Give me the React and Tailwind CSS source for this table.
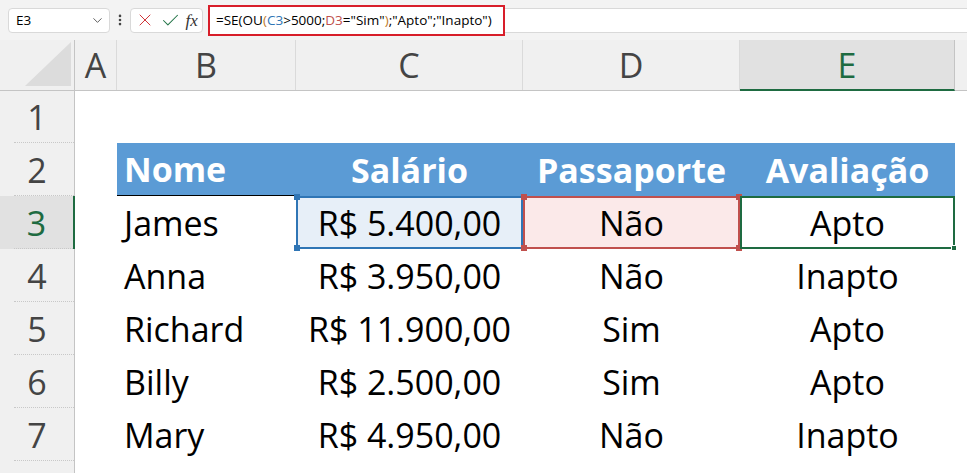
import React from "react";
import { ChevronDown, EllipsisVertical, X, Check } from "lucide-react";

const cols = "grid grid-cols-[75px_42px_179px_227px_217px_215px_1fr]";

const rows = [
  ["Anna", "R$ 3.950,00", "Não", "Inapto"],
  ["Richard", "R$ 11.900,00", "Sim", "Apto"],
  ["Billy", "R$ 2.500,00", "Sim", "Apto"],
  ["Mary", "R$ 4.950,00", "Não", "Inapto"],
];

function RowHead({ n, active }) {
  return (
    <div
      className={
        active
          ? "relative flex items-center justify-center bg-[#e1e1e1] text-[#1e6b41] border-r-2 border-[#1e6b41]"
          : "relative flex items-center justify-center bg-[#f0f0f0] text-[#444] border-r border-[#c4c4c4]"
      }
    >
      {n}
      <span className="absolute left-[14px] right-0 bottom-0 border-b border-dotted border-[#c8c8c8]" />
    </div>
  );
}

function Square({ className }) {
  return <span className={"absolute w-[6px] h-[6px] " + className} />;
}

export default function App() {
  return (
    <div className="w-[967px] h-[473px] overflow-hidden bg-white font-['Open_Sans',sans-serif]">
      {/* formula bar */}
      <div className="h-[40px] bg-[#f3f3f3] flex items-center text-[13.5px] text-black">
        <div className="ml-[8px] w-[102px] h-[25px] bg-white border border-[#d9d9d9] rounded-[4px] flex items-center justify-between pl-[7px] pr-[4px]">
          <span>E3</span>
          <ChevronDown size={15} strokeWidth={1.5} className="text-[#555]" />
        </div>
        <div className="w-[20px] flex justify-center text-[#444]">
          <EllipsisVertical size={14} strokeWidth={2.5} />
        </div>
        <div className="w-[73px] h-[25px] bg-white border border-[#d9d9d9] rounded-[4px] flex items-center justify-around px-[2px]">
          <X size={20} strokeWidth={1.2} className="text-[#d13438]" />
          <Check size={21} strokeWidth={1.2} className="text-[#217346]" />
          <span className="font-['Liberation_Serif',serif] italic text-[17px] text-[#333] leading-none">fx</span>
        </div>
        <div className="ml-[5px] flex-1 h-[25px] bg-white border-y border-[#d9d9d9] flex items-center">
          <div className="w-[297px] h-[31px] border-2 border-[#d81e2a] flex items-center pl-[6px] bg-white">
            <span>
              =SE(OU<span className="text-[#c07a2a]">(</span>
              <span className="text-[#2f75b5]">C3</span>&gt;5000;
              <span className="text-[#c0504d]">D3</span>="Sim"
              <span className="text-[#c07a2a]">)</span>;"Apto";"Inapto")
            </span>
          </div>
        </div>
      </div>

      <div className="text-[34px] leading-none">
        {/* column headers */}
        <div className={cols + " h-[51px] bg-[#f0f0f0] text-[#444] border-b border-[#c4c4c4]"}>
          <div className="relative border-r border-[#c4c4c4]">
            <svg width="46" height="44" className="absolute right-[3px] bottom-[4px]">
              <polygon points="46,0 46,44 0,44" fill="#dcdcdc" />
            </svg>
          </div>
          <div className="flex items-center justify-center border-r border-[#dadada]">A</div>
          <div className="flex items-center justify-center border-r border-[#dadada]">B</div>
          <div className="flex items-center justify-center border-r border-[#dadada]">C</div>
          <div className="flex items-center justify-center border-r border-[#dadada]">D</div>
          <div className="flex items-center justify-center bg-[#e1e1e1] text-[#1e6b41] border-b-2 border-[#1e6b41] border-r border-r-[#c4c4c4] -mb-px">
            E
          </div>
          <div />
        </div>

        {/* row 1 */}
        <div className={cols + " h-[52px]"}>
          <RowHead n={1} />
        </div>

        {/* row 2 header */}
        <div className={cols + " h-[53px]"}>
          <RowHead n={2} />
          <div />
          <div className="flex items-center pl-[7px] bg-[#5b9bd5] text-white font-bold border-b border-black">Nome</div>
          <div className="flex items-center justify-center bg-[#5b9bd5] text-white font-bold">Salário</div>
          <div className="flex items-center justify-center bg-[#5b9bd5] text-white font-bold">Passaporte</div>
          <div className="flex items-center justify-center bg-[#5b9bd5] text-white font-bold">Avaliação</div>
          <div />
        </div>

        {/* row 3 */}
        <div className={cols + " h-[53px] text-black"}>
          <RowHead n={3} active />
          <div />
          <div className="flex items-center pl-[7px]">James</div>
          <div className="relative flex items-center justify-center bg-[#e7eff8] border-2 border-[#2f75b5]">
            R$ 5.400,00
            <Square className="bg-[#2f75b5] -left-[4px] -top-[4px]" />
            <Square className="bg-[#2f75b5] -left-[4px] -bottom-[4px]" />
          </div>
          <div className="relative flex items-center justify-center bg-[#fbe9e9] border-2 border-[#c0504d]">
            Não
            <Square className="bg-[#c0504d] -left-[4px] -top-[4px]" />
            <Square className="bg-[#c0504d] -left-[4px] -bottom-[4px]" />
            <Square className="bg-[#c0504d] -right-[4px] -top-[4px]" />
            <Square className="bg-[#c0504d] -right-[4px] -bottom-[4px]" />
          </div>
          <div className="relative flex items-center justify-center border-2 border-[#1e6b41]">
            Apto
            <Square className="bg-[#1e6b41] border border-white -right-[4px] -bottom-[4px]" />
          </div>
          <div />
        </div>

        {rows.map((r, i) => (
          <div key={i} className={cols + " h-[53px] text-black"}>
            <RowHead n={i + 4} />
            <div />
            <div className="flex items-center pl-[7px]">{r[0]}</div>
            <div className="flex items-center justify-center">{r[1]}</div>
            <div className="flex items-center justify-center">{r[2]}</div>
            <div className="flex items-center justify-center">{r[3]}</div>
            <div />
          </div>
        ))}

        <div className={cols + " h-[20px]"}>
          <div className="bg-[#f0f0f0] border-r border-[#c4c4c4]" />
        </div>
      </div>
    </div>
  );
}
